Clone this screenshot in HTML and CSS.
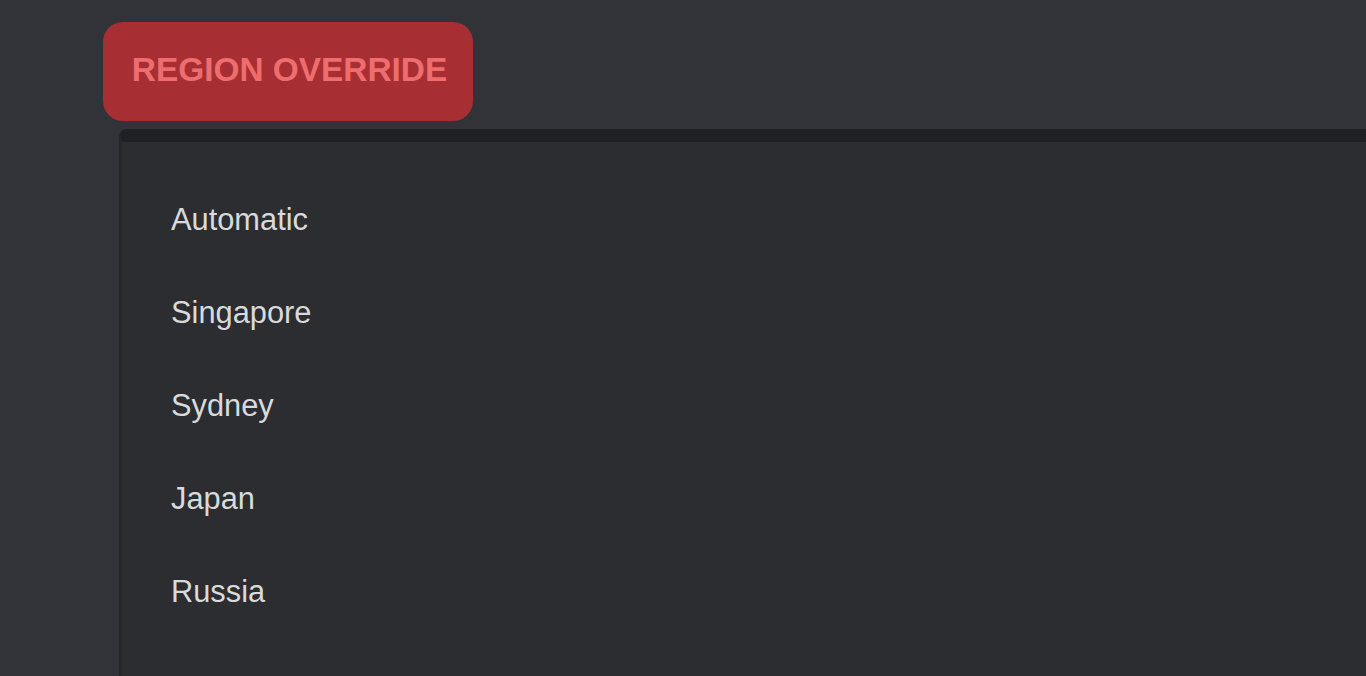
FILE: index.html
```html
<!DOCTYPE html>
<html>
<head>
<meta charset="utf-8">
<link rel="stylesheet" href="styles.css">
</head>
<body>
<div class="page">
  <div class="badge">REGION OVERRIDE</div>
  <div class="panel">
    <ul class="regions">
      <li>Automatic</li>
      <li>Singapore</li>
      <li>Sydney</li>
      <li>Japan</li>
      <li>Russia</li>
    </ul>
  </div>
</div>
</body>
</html>
```
FILE: styles.css
```css
html, body {
  margin: 0;
  padding: 0;
  background: #313338;
  height: 100%;
  overflow: hidden;
}
.page {
  padding: 22px 0 0 103px;
  font-family: "Liberation Sans", Arial, sans-serif;
}
.badge {
  display: flex;
  align-items: center;
  justify-content: center;
  box-sizing: border-box;
  width: 370px;
  height: 99px;
  padding: 0 0 4px 3px;
  border-radius: 20px;
  background: #a72f33;
  color: #ee6d6e;
  font-weight: bold;
  font-size: 33.4px;
}
.panel {
  margin: 8px 0 0 16px;
  background: #2b2d31;
  border-top: 13px solid #1f2024;
  border-left: 3px solid #25262a;
  border-top-left-radius: 8px;
  padding: 31px 0 0 49px;
  height: 503px;
}
.regions {
  list-style: none;
  margin: 0;
  padding: 0;
}
.regions li {
  font-size: 30.8px;
  line-height: 93px;
  color: #d9dadc;
}
```
